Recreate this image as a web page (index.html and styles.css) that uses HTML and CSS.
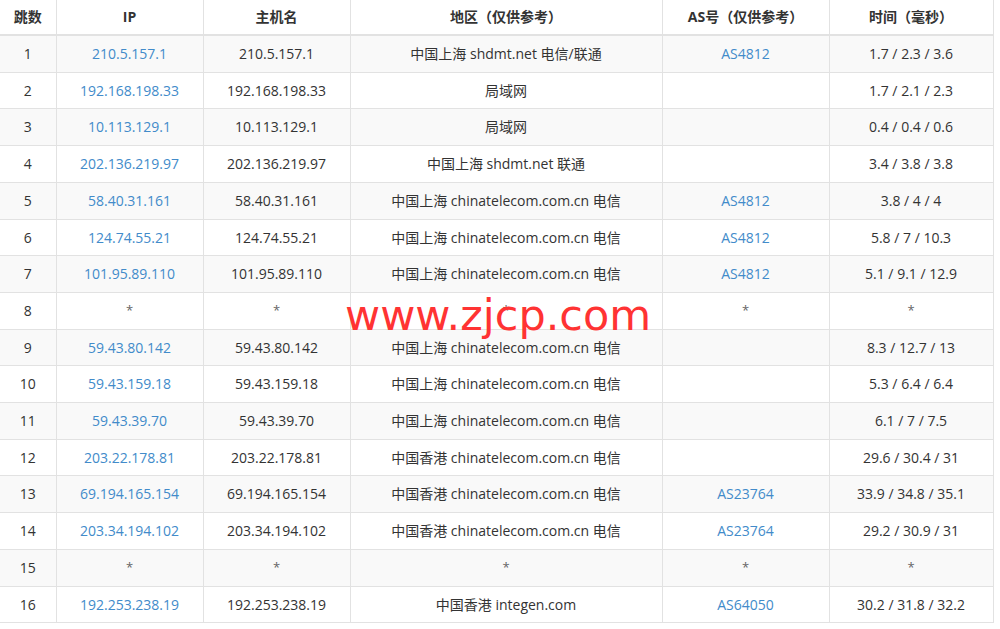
FILE: index.html
```html
<!DOCTYPE html>
<html lang="zh-CN">
<head>
  <meta charset="UTF-8" />
  <meta name="viewport" content="width=device-width" />
  <title>路由追踪</title>
  <link rel="stylesheet" href="styles.css">
</head>

<body>
  <div class="wrap">
    <table class="trace">
      <colgroup>
        <col class="c-hop">
        <col class="c-ip">
        <col class="c-host">
        <col class="c-area">
        <col class="c-as">
        <col class="c-time">
      </colgroup>
      <thead>
        <tr>
          <th>跳数</th>
          <th>IP</th>
          <th>主机名</th>
          <th>地区（仅供参考）</th>
          <th>AS号（仅供参考）</th>
          <th>时间（毫秒）</th>
        </tr>
      </thead>
      <tbody>
        <tr><td>1</td><td class="link">210.5.157.1</td><td>210.5.157.1</td><td>中国上海 shdmt.net 电信/联通</td><td class="link">AS4812</td><td>1.7 / 2.3 / 3.6</td></tr>
        <tr><td>2</td><td class="link">192.168.198.33</td><td>192.168.198.33</td><td>局域网</td><td></td><td>1.7 / 2.1 / 2.3</td></tr>
        <tr><td>3</td><td class="link">10.113.129.1</td><td>10.113.129.1</td><td>局域网</td><td></td><td>0.4 / 0.4 / 0.6</td></tr>
        <tr><td>4</td><td class="link">202.136.219.97</td><td>202.136.219.97</td><td>中国上海 shdmt.net 联通</td><td></td><td>3.4 / 3.8 / 3.8</td></tr>
        <tr><td>5</td><td class="link">58.40.31.161</td><td>58.40.31.161</td><td>中国上海 chinatelecom.com.cn 电信</td><td class="link">AS4812</td><td>3.8 / 4 / 4</td></tr>
        <tr><td>6</td><td class="link">124.74.55.21</td><td>124.74.55.21</td><td>中国上海 chinatelecom.com.cn 电信</td><td class="link">AS4812</td><td>5.8 / 7 / 10.3</td></tr>
        <tr><td>7</td><td class="link">101.95.89.110</td><td>101.95.89.110</td><td>中国上海 chinatelecom.com.cn 电信</td><td class="link">AS4812</td><td>5.1 / 9.1 / 12.9</td></tr>
        <tr><td>8</td><td class="star">*</td><td class="star">*</td><td class="star">*</td><td class="star">*</td><td class="star">*</td></tr>
        <tr><td>9</td><td class="link">59.43.80.142</td><td>59.43.80.142</td><td>中国上海 chinatelecom.com.cn 电信</td><td></td><td>8.3 / 12.7 / 13</td></tr>
        <tr><td>10</td><td class="link">59.43.159.18</td><td>59.43.159.18</td><td>中国上海 chinatelecom.com.cn 电信</td><td></td><td>5.3 / 6.4 / 6.4</td></tr>
        <tr><td>11</td><td class="link">59.43.39.70</td><td>59.43.39.70</td><td>中国上海 chinatelecom.com.cn 电信</td><td></td><td>6.1 / 7 / 7.5</td></tr>
        <tr><td>12</td><td class="link">203.22.178.81</td><td>203.22.178.81</td><td>中国香港 chinatelecom.com.cn 电信</td><td></td><td>29.6 / 30.4 / 31</td></tr>
        <tr><td>13</td><td class="link">69.194.165.154</td><td>69.194.165.154</td><td>中国香港 chinatelecom.com.cn 电信</td><td class="link">AS23764</td><td>33.9 / 34.8 / 35.1</td></tr>
        <tr><td>14</td><td class="link">203.34.194.102</td><td>203.34.194.102</td><td>中国香港 chinatelecom.com.cn 电信</td><td class="link">AS23764</td><td>29.2 / 30.9 / 31</td></tr>
        <tr><td>15</td><td class="star">*</td><td class="star">*</td><td class="star">*</td><td class="star">*</td><td class="star">*</td></tr>
        <tr><td>16</td><td class="link">192.253.238.19</td><td>192.253.238.19</td><td>中国香港 integen.com</td><td class="link">AS64050</td><td>30.2 / 31.8 / 32.2</td></tr>
      </tbody>
    </table>
    <div class="watermark">www.zjcp.com</div>
  </div>
</body>
</html>
```

FILE: styles.css
```css
body {
  margin: 0;
  background: #fff;
  font-family: "Open Sans", "Noto Sans CJK SC", sans-serif;
  font-size: 14px;
  color: #333;
}
.wrap {
  position: relative;
  width: 993px;
}
.trace {
  width: 993px;
  border-collapse: collapse;
  table-layout: fixed;
}
.c-hop { width: 56px; }
.c-ip { width: 147px; }
.c-host { width: 147px; }
.c-area { width: 312px; }
.c-as { width: 167px; }
.c-time { width: 164px; }

.trace th,
.trace td {
  text-align: center;
  border: 1px solid #e2e2e2;
  white-space: nowrap;
  overflow: hidden;
}
.trace th {
  padding: 7px 4px;
  line-height: 20px;
  font-weight: bold;
  border-top: none;
  border-bottom: 2px solid #e2e2e2;
}
.trace td {
  padding: 8px 4px;
  line-height: 19.7px;
}
.trace th:first-child,
.trace td:first-child {
  border-left: none;
}
.trace tbody tr:nth-child(odd) {
  background: #f9f9f9;
}
.trace .link {
  color: #428bca;
}
.trace .star {
  color: #666;
  font-size: 13px;
}
.watermark {
  position: absolute;
  left: 345px;
  top: 290px;
  font-family: "DejaVu Sans", sans-serif;
  font-size: 43px;
  line-height: 50px;
  color: #ff3333;
}
```
